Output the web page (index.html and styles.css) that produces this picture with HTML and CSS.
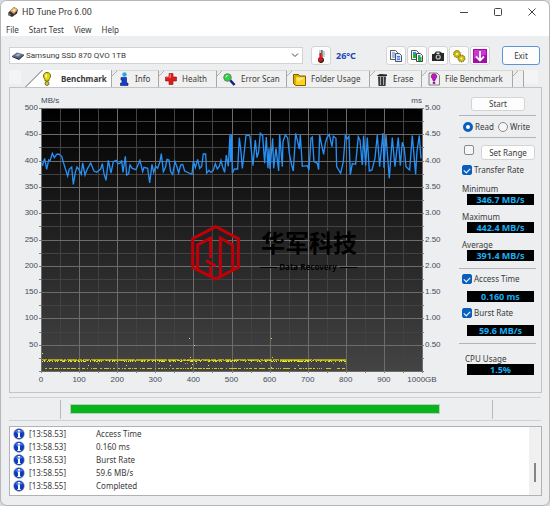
FILE: index.html
```html
<!DOCTYPE html>
<html lang="en">
  <head>
    <meta charset="UTF-8" />
    <meta name="viewport" content="width=device-width, initial-scale=1.0" />
    <title>HD Tune Pro 6.00</title>
    <link rel="stylesheet" href="styles.css">
  </head>
  <body>
    <svg class="symbols" aria-hidden="true">
      <symbol id="info" viewBox="0 0 12 12">
        <circle cx="6" cy="6" r="5.7" fill="#8e97a8" />
        <circle cx="6" cy="6" r="5" fill="#0b3cc0" />
        <path d="M2 4a4.6 4.6 0 0 1 8 0Q6 5.500 2 4z" fill="#4d7be6" />
        <path d="M5 2h2v1.600H5zM4.500 4.600H7V9h.7v1H4.400V9H5V5.500h-.5z" fill="#fff" />
      </symbol>
    </svg>
    <div class="window">
      <header>
        <div class="titlebar">
          <svg class="app-icon" viewBox="0 0 12 12" width="12" height="12">
            <path d="M1 7l6-6 4 2.500-1 4L5 11 1 9z" fill="#34302e" />
            <path d="M3 5l4-4 4 2.500L7 8z" fill="#e2a566" />
            <path d="M5 4.500l2-1.700 2 1L7 6z" fill="#fbe3bd" />
            <path d="M1 7l3 1-1 2-2-1z" fill="#777" />
          </svg>
          <h1>HD Tune Pro 6.00</h1>
          <div class="window-buttons">
            <button aria-label="Minimize"><svg viewBox="0 0 8 8" width="8" height="8"><path d="M0 4.500h8" /></svg></button>
            <button aria-label="Maximize"><svg viewBox="0 0 8 8" width="8" height="8"><rect x=".5" y=".5" width="7" height="7" rx="1" /></svg></button>
            <button aria-label="Close"><svg viewBox="0 0 8 8" width="8" height="8"><path d="M.5.5l7 7M7.500.5l-7 7" /></svg></button>
          </div>
        </div>
        <nav class="menu">
          <a href="#">File</a>
          <a href="#">Start Test</a>
          <a href="#">View</a>
          <a href="#">Help</a>
        </nav>
      </header>

      <div class="toolbar">
        <div class="drive">
          <svg viewBox="0 0 12 8" width="12" height="8">
            <path d="M0 4l5-3.500 7 2L7 7z" fill="#5b6b86" />
            <path d="M0 4v1l7 3 5-4.500v-1L7 6.500z" fill="#272f40" />
            <path d="M3 3.500l3-2 3 1-3 2z" fill="#9aabc8" />
          </svg>
          <select aria-label="Drive">
            <option>Samsung SSD 870 QVO 1TB</option>
          </select>
          <svg class="chevron" viewBox="0 0 8 5" width="8" height="5"><path d="M1 .5l3 3 3-3" /></svg>
        </div>
        <button class="tool" aria-label="Temperature">
          <svg viewBox="0 0 14 14" width="14" height="14">
            <path d="M5.500 1h3v7.500a3 3 0 1 1-3 0z" fill="#222" />
            <path d="M5 1h2.500v8H5z" fill="#bcd" />
            <path d="M5.500 4h2v5h-2z" fill="#e01818" />
            <circle cx="6.500" cy="10.500" r="2.400" fill="#d81414" />
            <path d="M9 3h2M9 5h2M9 7h2" stroke="#999" />
          </svg>
        </button>
        <strong class="temp">26°C</strong>
        <div class="tools">
          <button class="tool" aria-label="Copy text">
            <svg viewBox="0 0 14 14" width="14" height="14">
              <path d="M1.500 1.500h5l2 2v7h-7z" fill="#f4f8ff" stroke="#555" />
              <path d="M6.500 4.500h4l2 2v6h-6z" fill="#dce9ff" stroke="#456" />
              <path d="M3 4h3M3 6h3M3 8h3M8 7.500h3M8 9h3M8 10.500h3" stroke="#4878d8" />
            </svg>
          </button>
          <button class="tool" aria-label="Copy picture">
            <svg viewBox="0 0 14 14" width="14" height="14">
              <path d="M1.500 1.500h5l2 2v7h-7z" fill="#f4f8ff" stroke="#555" />
              <path d="M6.500 4.500h4l2 2v6h-6z" fill="#fff" stroke="#444" />
              <path d="M3 5h3v4H3zM8 8h3.500v4H8z" fill="#19b52b" />
              <path d="M3 3h3v2H3zM8 6h2.500v2H8z" fill="#3d87d9" />
            </svg>
          </button>
          <button class="tool" aria-label="Save screenshot">
            <svg viewBox="0 0 14 14" width="14" height="14">
              <path d="M1 5h2l2-2.500h4L11 4h2v8H1z" fill="#262626" />
              <path d="M5.500 3.500h3v1.500h-3z" fill="#ddd" />
              <circle cx="7.200" cy="8" r="2.600" fill="#b8c4bc" />
              <circle cx="7.200" cy="8" r="1.400" fill="#25352c" />
            </svg>
          </button>
          <button class="tool" aria-label="Options">
            <svg viewBox="0 0 14 14" width="14" height="14">
              <g fill="#cdbb12" stroke="#6a5f00" stroke-width="1" stroke-dasharray="1.500 .8">
                <circle cx="5" cy="5" r="3.400" />
                <circle cx="9.500" cy="9.500" r="3.400" />
              </g>
              <circle cx="5" cy="5" r="1" fill="#fffad0" />
              <circle cx="9.500" cy="9.500" r="1" fill="#fffad0" />
            </svg>
          </button>
          <button class="tool" aria-label="Save">
            <svg viewBox="0 0 14 14" width="14" height="14">
              <rect width="14" height="14" fill="#a807b0" />
              <path d="M1 1h12v5Q6 6 1 10z" fill="#c937d0" />
              <path d="M7 2v9M3 7.500l4 4 4-4" fill="none" stroke="#fff" stroke-width="1.800" />
            </svg>
          </button>
        </div>
        <button class="exit">Exit</button>
      </div>

      <div class="tabs" role="tablist">
        <span class="stub"></span>
        <button class="tab active" role="tab">
          <svg viewBox="0 0 12 14" width="12" height="14">
            <path d="M6 .5C3.500.5 2.500 2 2.500 4c0 2 1.500 2.500 1.700 5h3.500C8 6.500 9.500 6 9.500 4c0-2-1-3.500-3.500-3.500z" fill="#e6d80c" stroke="#6f6800" />
            <path d="M4.500 2.500h1.500v3H4.500z" fill="#fffcc0" />
            <circle cx="6" cy="11.500" r="2" fill="#d8ca08" stroke="#555" stroke-width=".8" />
          </svg>
          Benchmark
        </button>
        <button class="tab" role="tab">
          <svg viewBox="0 0 12 14" width="12" height="14">
            <circle cx="6.500" cy="2.500" r="2.200" fill="#27a9e8" />
            <path d="M3 5.500h5.500V11H10v2.500H2.500V11H4V8H3z" fill="#123fd0" stroke="#0a1c5c" stroke-width=".6" />
          </svg>
          Info
        </button>
        <button class="tab" role="tab">
          <svg viewBox="0 0 12 12" width="12" height="12">
            <path d="M4 .5h4V4h3.500v4H8v3.500H4V8H.5V4H4z" fill="#e01b1b" stroke="#8c1010" stroke-width=".6" />
            <path d="M4.500 1h1.500v4H1V4.500h3.500z" fill="#f66" />
          </svg>
          Health
        </button>
        <button class="tab" role="tab">
          <svg viewBox="0 0 13 13" width="13" height="13">
            <path d="M7 7l4.500 5" stroke="#101c80" stroke-width="2.600" />
            <circle cx="4.500" cy="4.500" r="3.800" fill="#23d63c" stroke="#777" />
            <path d="M2.500 5a2.500 2.500 0 0 1 3-3z" fill="#c5ffcd" />
          </svg>
          Error Scan
        </button>
        <button class="tab" role="tab">
          <svg viewBox="0 0 13 13" width="13" height="13">
            <path d="M.5 1.500h5L7 3h5.500v9.500h-10l-2-2z" fill="#e0a800" stroke="#7d6000" />
            <path d="M3 4.500h9V12H3z" fill="#ffd21c" />
            <path d="M3 4.500h9L5 9z" fill="#ffee80" />
          </svg>
          Folder Usage
        </button>
        <button class="tab" role="tab">
          <svg viewBox="0 0 12 13" width="12" height="13">
            <path d="M1 2.500L4 1l7 .5V3H1z" fill="#222" />
            <path d="M2 3.500h8L9.500 13h-7z" fill="#3a3a3a" />
            <path d="M4.500 4v8M7.500 4v8" stroke="#aaa" />
          </svg>
          Erase
        </button>
        <button class="tab" role="tab">
          <svg viewBox="0 0 12 14" width="12" height="14">
            <path d="M1 1h8l2.500 2.500V13H1z" fill="#eee" stroke="#666" stroke-width=".8" />
            <path d="M6 2C4 2 3.300 3.200 3.300 4.500S4.800 6.500 5 8.500h2c.2-2 1.700-2.500 1.700-4S8 2 6 2z" fill="#c316c9" stroke="#5e0962" stroke-width=".7" />
            <circle cx="6" cy="10.800" r="1.400" fill="#a40faa" />
          </svg>
          File Benchmark
        </button>
        <span class="tab"></span>
        <span class="stub"></span>
      </div>

      <main class="panel">
        <svg class="chart" viewBox="10 88 440 304" role="img" aria-label="Transfer rate and access time">
          <defs>
            <linearGradient id="shade" x1="0" y1="0" x2="0" y2="1">
              <stop offset="0" stop-color="#000" />
              <stop offset="1" stop-color="#444" />
            </linearGradient>
          </defs>
          <rect x="41" y="108" width="381" height="263" fill="url(#shade)" />
          <g id="grid"></g>
          <g id="axes">
            <text x="41" y="103">MB/s</text>
            <text x="422" y="103" text-anchor="end">ms</text>
          </g>
          <g id="access"></g>
          <polyline id="transfer" transform="translate(30 95) scale(.3333)" points="34,205 38,210 44,190 50,223 56,195 60,198 67,175 73,188 80,178 86,177 95,184 102,208 113,243 118,222 125,216 130,268 136,232 141,216 147,224 154,238 158,204 165,240 172,222 182,204 192,228 200,232 212,222 217,206 222,236 228,256 235,196 243,234 250,200 258,196 264,206 272,204 275,196 279,232 286,184 290,240 296,236 300,210 307,220 318,224 330,196 338,230 342,217 353,220 359,264 366,208 371,232 377,214 383,220 390,200 394,176 400,230 406,218 411,193 417,195 422,230 428,238 435,200 441,216 446,234 452,210 458,208 464,228 486,238 490,198 496,218 503,193 509,220 515,214 520,177 527,177 530,234 537,226 542,232 550,226 556,206 562,222 568,214 573,196 578,216 584,232 589,180 595,214 600,118 602,200 605,118 607,235 613,222 623,222 628,128 633,170 637,220 642,180 648,122 655,120 660,124 664,165 669,212 676,135 681,188 686,170 691,115 698,122 704,205 709,126 714,220 717,160 720,222 728,130 731,220 738,160 741,185 746,228 749,118 757,215 759,140 766,120 773,128 778,175 785,210 790,228 797,115 802,135 808,162 811,120 817,214 832,212 837,226 843,130 847,126 852,200 862,205 866,224 869,120 875,150 881,178 886,145 891,128 898,118 906,155 910,124 918,130 920,215 932,235 940,200 946,122 951,132 957,124 961,240 967,206 977,208 985,125 990,135 997,210 1001,122 1007,212 1012,128 1018,228 1026,225 1035,190 1042,120 1049,215 1059,114 1062,218 1068,120 1078,250 1087,128 1095,215 1105,128 1111,212 1117,142 1123,160 1128,215 1139,225 1147,122 1157,238 1161,170 1168,122 1173,190" />
          <g class="logo" transform="translate(185 220) scale(.3333)">
            <path d="M92 20l68 36v86l-68 35-69-35V56z" />
            <path d="M38 148V75l39-21v60M64 122l28 16M77 138v28M106 168V54l37 21v72" />
          </g>
          <g class="brand">
            <text class="brand-cn" x="261" y="252">华军科技</text>
            <text class="brand-en" x="308" y="270">Data Recovery</text>
            <path d="M260 267.500h17M340 267.500h17" />
          </g>
        </svg>

        <form class="side">
          <button type="button" class="start">Start</button>
          <hr>
          <div class="modes">
            <label><input type="radio" name="mode" checked>Read</label>
            <label><input type="radio" name="mode">Write</label>
          </div>
          <hr>
          <div class="range">
            <input type="checkbox" aria-label="Use range">
            <button type="button">Set Range</button>
          </div>
          <label class="check"><input type="checkbox" checked>Transfer Rate</label>
          <div class="stat"><span>Minimum</span><output>346.7 MB/s</output></div>
          <div class="stat"><span>Maximum</span><output>442.4 MB/s</output></div>
          <div class="stat"><span>Average</span><output>391.4 MB/s</output></div>
          <hr>
          <label class="check"><input type="checkbox" checked>Access Time</label>
          <output class="single">0.160 ms</output>
          <label class="check"><input type="checkbox" checked>Burst Rate</label>
          <output class="single">59.6 MB/s</output>
          <hr>
          <div class="stat cpu"><span>CPU Usage</span><output>1.5%</output></div>
        </form>
      </main>

      <div class="status">
        <progress value="100" max="100" aria-label="Test progress"></progress>
      </div>

      <div class="log">
        <table>
          <tr><td><svg><use href="#info" /></svg></td><td>[13:58.53]</td><td>Access Time</td></tr>
          <tr><td><svg><use href="#info" /></svg></td><td>[13:58.53]</td><td>0.160 ms</td></tr>
          <tr><td><svg><use href="#info" /></svg></td><td>[13:58.53]</td><td>Burst Rate</td></tr>
          <tr><td><svg><use href="#info" /></svg></td><td>[13:58.55]</td><td>59.6 MB/s</td></tr>
          <tr><td><svg><use href="#info" /></svg></td><td>[13:58.55]</td><td>Completed</td></tr>
        </table>
        <div class="scrollbar"><span></span></div>
      </div>
    </div>

    <script src="chart.js"></script>
  </body>
</html>
```

FILE: styles.css
```css
*{
    box-sizing: border-box;
}

body{
    margin: 0;
    background: #d5d9dd;
    color: #3a3a3a;
    font-family: 'Noto Sans', 'Open Sans', sans-serif;
    font-size: 8px;
    line-height: 12px;
}
button, select, input{
    font: inherit;
    color: inherit;
    margin: 0;
}
button{
    padding: 0;
    border: 1px solid #d4d4d4;
    border-radius: 3px;
    background: #fdfdfd;
}
a{
    color: inherit;
    text-decoration: none;
}
svg{
    display: block;
    flex: none;
}
.symbols{
    position: absolute;
    width: 0;
    height: 0;
}

.window{
    display: flex;
    flex-direction: column;
    min-height: 100vh;
    border: 1px solid #b4b6b8;
    border-radius: 7px;
    background: #eceef0;
    overflow: hidden;
}

/* title and menu */
header{
    background: #fff;
    height: 35px;
}
.titlebar{
    display: flex;
    align-items: center;
    height: 21px;
    padding: 0 13px 0 6px;
}
.titlebar h1{
    margin: 0 auto 0 3px;
    font-family: Roboto, sans-serif;
    font-size: 9px;
    font-weight: 400;
}
.window-buttons{
    display: flex;
    gap: 26px;
}
.window-buttons button{
    border: none;
    background: none;
}
.window-buttons path, .window-buttons rect, .chevron path{
    fill: none;
    stroke: #444;
}
.menu{
    display: flex;
    gap: 10px;
    padding: 2px 5px;
}

/* toolbar */
.toolbar{
    display: flex;
    align-items: center;
    height: 34px;
    padding: 5px 9px 0 8px;
}
.drive{
    flex: 1;
    display: flex;
    align-items: center;
    height: 17px;
    margin-right: 8px;
    padding: 0 3px 0 2px;
    border: 1px solid #d0d2d4;
    background: #fff;
}
.drive select{
    flex: 1;
    appearance: none;
    border: none;
    background: none;
    padding: 0 2px;
    font-family: Roboto, sans-serif;
}
.tool{
    display: flex;
    align-items: center;
    justify-content: center;
    width: 20px;
    height: 19px;
}
.temp{
    width: 50px;
    margin-left: 5px;
    color: #1c46b8;
    font-size: 9px;
}
.tools{
    display: flex;
    gap: 1px;
    margin-right: 12px;
}
.exit{
    width: 38px;
    height: 19px;
    border-color: #5b95d6;
}

/* tabs */
.tabs{
    display: grid;
    grid-template-columns: 16fr 87fr 47fr 58fr 70fr 83fr 52fr 91fr 11fr 18fr;
    height: 17px;
    margin: 0 7px 0 8px;
}
.stub{
    background: #f4f4f4;
    margin: 0 4px 3px 0;
}
.tab{
    display: flex;
    align-items: center;
    gap: 5px;
    padding-left: 6px;
    border: none;
    border-top: 1px solid #d8d8d8;
    border-right: 1px solid #a8a8a8;
    border-radius: 4px 0 0 0;
    background: linear-gradient(135deg, #eceef0 3px, #b0b0b0 3px 4px, #f0f0f0 4px);
    white-space: nowrap;
}
.tab.active{
    gap: 8px;
    padding-left: 16px;
    border-top: none;
    background: linear-gradient(135deg, #eceef0 12px, #b0b0b0 12px 13px, #fff 13px);
    font-weight: 700;
}

/* chart and readings */
.panel{
    display: flex;
    align-items: flex-start;
    margin: 0 7px 0 8px;
    border: 1px solid #c2c4c6;
}
.chart{
    flex: 1;
    min-width: 0;
}
.chart text{
    font-family: 'Liberation Sans', sans-serif;
    font-size: 8px;
    fill: #454b58;
}
.major{
    stroke: #6c6c6c;
}
.minor{
    stroke: #424242;
}
.tick{
    stroke: #808080;
}
#transfer{
    fill: none;
    stroke: #2790f5;
    stroke-width: 4;
}
.logo path{
    fill: none;
    stroke: #c00008;
    stroke-width: 9;
}
.brand path{
    stroke: #000;
}
.chart .brand-cn{
    font-family: 'Noto Sans CJK SC', sans-serif;
    font-size: 24px;
    font-weight: 700;
    fill: #000;
}
.chart .brand-en{
    font-family: 'Noto Sans', sans-serif;
    font-weight: 700;
    text-anchor: middle;
    fill: #000;
}

.side{
    flex: none;
    width: 91px;
    display: flex;
    flex-direction: column;
    padding: 9px 5px 0 9px;
}
.side hr{
    width: 100%;
    height: 1px;
    margin: 7px 0 0;
    border: none;
    background: #b2b4b6;
}
.side .start{
    width: 54px;
    height: 14px;
    margin-left: 12px;
}
.side .start + hr{
    margin-top: 4px;
}
.side .modes + hr{
    margin-top: 0;
}
.modes{
    display: flex;
    gap: 4px;
    height: 21px;
    padding-left: 4px;
}
.side label{
    display: flex;
    align-items: center;
    gap: 2px;
    white-space: nowrap;
}
.side input{
    appearance: none;
    flex: none;
    width: 10px;
    height: 10px;
    border: 1px solid #8a8a8a;
    border-radius: 2px;
    background: #f6f6f6;
}
.side input[type=radio]{
    border-radius: 50%;
}
.side input[type=radio]:checked{
    border: 3px solid #0a5fbe;
    background: #fff;
}
.side input[type=checkbox]:checked{
    display: flex;
    border-color: #0a5fbe;
    background: #0a5fbe;
}
.side input[type=checkbox]:checked::after{
    content: '';
    width: 5px;
    height: 3px;
    margin: 2px auto;
    border: solid #fff;
    border-width: 0 0 1px 1px;
    transform: rotate(-45deg);
}
.range{
    display: flex;
    justify-content: space-between;
    height: 15px;
    margin-top: 7px;
    padding: 0 1px 0 5px;
}
.range button{
    width: 54px;
}
.side .check{
    height: 20px;
    padding-left: 3px;
}
.stat{
    display: flex;
    flex-direction: column;
    margin-top: 3px;
}
.stat + .stat{
    margin-top: 6px;
}
.stat span{
    padding-left: 3px;
    line-height: 11px;
}
output{
    display: block;
    height: 11px;
    margin: 0 2px 0 8px;
    background: #000;
    color: #16b0f5;
    font-size: 9px;
    font-weight: 700;
    line-height: 11px;
    text-align: center;
}
.single{
    margin-top: 2px;
}
.single + .check{
    margin-top: 1px;
}
.stat.cpu{
    margin-top: 9px;
}
.cpu span{
    padding-left: 6px;
}

/* progress */
.status{
    display: flex;
    align-items: center;
    height: 24px;
    margin: 4px 8px;
    padding: 2px 48px 2px 51px;
    border: solid #cfd1d3;
    border-width: 1px 0;
}
.status::before, .status::after{
    content: '';
    width: 1px;
    height: 19px;
    background: #b8babc;
}
progress{
    appearance: none;
    flex: 1;
    height: 10px;
    margin: 0 52px 0 9px;
    border: 1px solid #bccbbc;
}
progress::-webkit-progress-bar{
    background: #e6e6e6;
}
progress::-webkit-progress-value{
    background: #06b41c;
}

/* log */
.log{
    flex: 1;
    display: flex;
    justify-content: space-between;
    margin: 1px 7px 9px 8px;
    border: 1px solid #b0b2b6;
    background: #fff;
}
.log table{
    border-collapse: collapse;
    align-self: flex-start;
}
.log td{
    height: 13px;
    padding: 0;
}
.log td:first-child{
    width: 19px;
    padding-left: 3px;
}
.log td:nth-child(2){
    width: 67px;
}
.log td svg{
    width: 12px;
    height: 12px;
}
.scrollbar{
    width: 12px;
    padding: 36px 5px 0;
    background: #f0f0f0;
}
.scrollbar span{
    display: block;
    width: 2px;
    height: 19px;
    background: #858585;
}
```

FILE: chart.js
```js
const grid = document.getElementById('grid');
const axes = document.getElementById('axes');
const access = document.getElementById('access');

const left = 41, right = 422, top_ = 108, bottom = 371;

function add(parent, name, attrs, text){
    const el = document.createElementNS('http://www.w3.org/2000/svg', name);
    for(const key in attrs){
        el.setAttribute(key, attrs[key]);
    }
    if(text !== undefined){
        el.textContent = text;
    }
    parent.appendChild(el);
}

function line(parent, x1, y1, x2, y2, cls){
    add(parent, 'line', {x1, y1, x2, y2, class: cls});
}

// minor lines first so the major ones lie over them
[1, 0].forEach((odd) => {
    const cls = odd ? 'minor' : 'major';
    for(let i = odd; i <= 20; i += 2){
        const x = Math.round(left + (right - left) * i / 20) + 0.5;
        const y = Math.round(top_ + (bottom - top_) * i / 20) + 0.5;
        line(grid, x, top_, x, bottom, cls);
        line(grid, left, y, right, y, cls);
        line(axes, x, bottom, x, bottom + 2, 'tick');
        line(axes, left - 2, y, left, y, 'tick');
        line(axes, right, y, right + 2, y, 'tick');
    }
});

for(let i = 0; i <= 10; i++){
    const x = left + (right - left) * i / 10;
    const y = top_ + (bottom - top_) * i / 10 + 2;
    add(axes, 'text', {x, y: 382, 'text-anchor': 'middle'}, i === 10 ? '1000GB' : i * 100);
    if(i < 10){
        add(axes, 'text', {x: 38, y, 'text-anchor': 'end'}, 500 - i * 50);
        add(axes, 'text', {x: 425, y}, (5 - i * 0.5).toFixed(2));
    }
}

// access time samples
let seed = 7;
function rnd(){
    seed = (seed * 16807) % 2147483647;
    return seed / 2147483647;
}
function dot(x, y, color){
    add(access, 'rect', {x, y, width: 1, height: 1, fill: color});
}
for(let x = left + 1; x < 346; x++){
    if(rnd() < 0.9) dot(x, 359, '#a8a020');
    if(rnd() < 0.9) dot(x, 360, rnd() < 0.4 ? '#e8e020' : '#b4ac20');
    if(rnd() < 0.4) dot(x, 361, '#f0e818');
    if(rnd() < 0.03) dot(x, 363, '#a8a020');
    if(rnd() < 0.6) dot(x, 368, '#d0c818');
}
[[42, 353], [189, 338], [194, 345], [190, 357], [192, 364], [191, 367], [88, 365],
 [126, 365], [170, 365], [208, 365], [271, 338], [272, 357], [271, 367], [298, 365]].forEach(([x, y]) => dot(x, y, '#e8e020'));
```
